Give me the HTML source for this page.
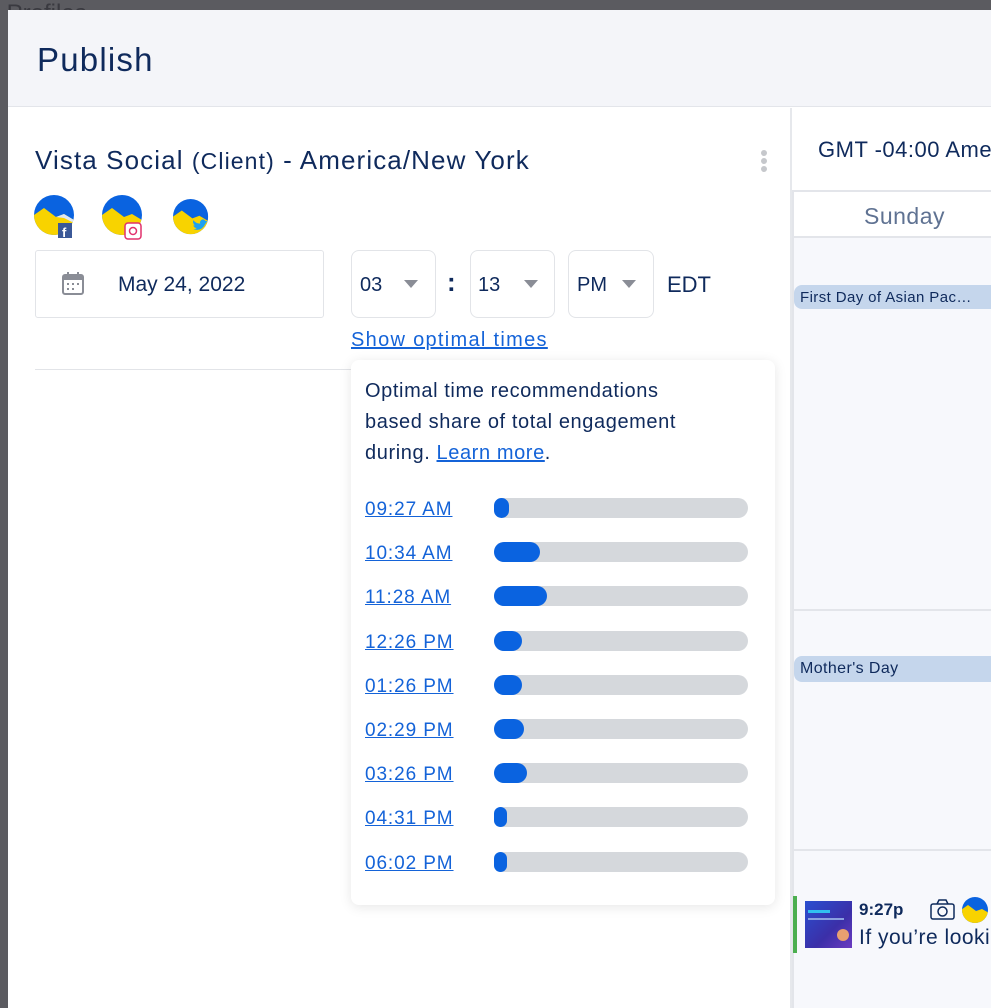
<!DOCTYPE html>
<html><head><meta charset="utf-8">
<style>
*{box-sizing:border-box;margin:0;padding:0}
body{width:991px;height:1008px;overflow:hidden;background:#5b5b60;font-family:"Liberation Sans",sans-serif;color:#0f2a5c;position:relative}
.abs{position:absolute}
.modal{left:8px;top:10px;width:983px;height:998px;background:#fff}
.hdr{left:8px;top:10px;width:983px;height:97px;background:#f4f5f9;border-bottom:1px solid #e3e5ea}
a,.lnk{color:#1463d8;text-decoration:underline}
.box{border:1px solid #e2e4e8;border-radius:8px;background:#fff}
.tri{width:0;height:0;border-left:7px solid transparent;border-right:7px solid transparent;border-top:8px solid #8a8d96;position:absolute}
.bar{position:absolute;left:494px;width:254px;height:20px;border-radius:10px;background:#d5d8dc}
.bar i{display:block;height:20px;border-radius:10px;background:#0a63e0}
.t{position:absolute;left:365px;font-size:19px;color:#1463d8;text-decoration:underline;letter-spacing:0.9px}
</style></head><body>
<div class="abs" style="left:0;top:0;font-size:24px;color:#3a3a40">&nbsp;Profiles</div>
<div class="abs modal"></div>
<div class="abs hdr"></div>
<div class="abs" style="left:37px;top:41px;font-size:33px;letter-spacing:1.2px">Publish</div>

<div class="abs" style="left:35px;top:145px;font-size:26px;letter-spacing:1.1px;white-space:nowrap">Vista Social <span style="font-size:23px">(Client)</span> - America/New York</div>
<div class="abs" style="left:761px;top:150px;width:6px;height:6px;border-radius:3px;background:#c6c8cc;box-shadow:0 8px 0 #c6c8cc,0 16px 0 #c6c8cc"></div>

<svg class="abs" style="left:34px;top:195px" width="180" height="48">
<defs><clipPath id="c"><circle cx="20" cy="20" r="20"/></clipPath></defs>
<g clip-path="url(#c)"><rect width="40" height="40" fill="#0a63e0"/><path d="M0 20 L10 13 L22 22 L30 19 L40 25 L40 40 L0 40Z" fill="#f8d300"/><path d="M22 22 L30 19 L40 25 L40 28 L30 23Z" fill="#dfe8f3"/></g>
<rect x="24" y="28" width="14" height="15" fill="#3b5998"/><text x="28" y="42" font-size="13" fill="#fff" font-weight="bold">f</text>
<g transform="translate(68,0)"><g clip-path="url(#c)"><rect width="40" height="40" fill="#0a63e0"/><path d="M0 20 L10 13 L22 22 L30 19 L40 25 L40 40 L0 40Z" fill="#f8d300"/></g>
<rect x="23" y="28" width="16" height="16" rx="3" fill="#fff" stroke="#e1306c" stroke-width="1.5"/><circle cx="31" cy="36" r="3.5" fill="none" stroke="#e1306c" stroke-width="1.5"/></g>
<g transform="translate(139,4) scale(0.88)"><g clip-path="url(#c)"><rect width="40" height="40" fill="#0a63e0"/><path d="M0 20 L10 13 L22 22 L30 19 L40 25 L40 40 L0 40Z" fill="#f8d300"/></g>
<path d="M22 34 q10 4 15-6 l2-3 -2 0 q-2-3-5-1 q-2 2-1 4 q-5 0-8-4 q-1 4 2 6 l-2 0 q1 3 4 3 q-2 2-5 1z" fill="#1da1f2"/></g>
</svg>

<div class="abs box" style="left:35px;top:250px;width:289px;height:68px;border-radius:3px"></div>
<svg class="abs" style="left:62px;top:272px" width="24" height="26"><rect x="1" y="3" width="20" height="19" rx="2" fill="none" stroke="#8a8d96" stroke-width="2"/><rect x="1" y="3" width="20" height="5" fill="#8a8d96"/><rect x="5" y="0" width="2" height="5" fill="#8a8d96"/><rect x="15" y="0" width="2" height="5" fill="#8a8d96"/><g fill="#8a8d96"><rect x="5" y="11" width="2" height="2"/><rect x="10" y="11" width="2" height="2"/><rect x="15" y="11" width="2" height="2"/><rect x="5" y="16" width="2" height="2"/><rect x="10" y="16" width="2" height="2"/></g></svg>
<div class="abs" style="left:118px;top:273px;font-size:21px">May 24, 2022</div>

<div class="abs box" style="left:351px;top:250px;width:85px;height:68px"></div>
<div class="abs" style="left:360px;top:274px;font-size:20px">03</div><div class="tri" style="left:404px;top:280px"></div>
<div class="abs" style="left:447px;top:267px;font-size:26px;font-weight:bold">:</div>
<div class="abs box" style="left:470px;top:250px;width:85px;height:68px"></div>
<div class="abs" style="left:478px;top:274px;font-size:20px">13</div><div class="tri" style="left:524px;top:280px"></div>
<div class="abs box" style="left:568px;top:250px;width:86px;height:68px"></div>
<div class="abs" style="left:577px;top:274px;font-size:20px">PM</div><div class="tri" style="left:622px;top:280px"></div>
<div class="abs" style="left:667px;top:272px;font-size:22px">EDT</div>
<div class="abs lnk" style="left:351px;top:329px;font-size:20px;letter-spacing:1.3px">Show optimal times</div>
<div class="abs" style="left:35px;top:369px;width:320px;height:1px;background:#e2e4e8"></div>

<div class="abs" style="left:351px;top:360px;width:424px;height:545px;background:#fff;border-radius:8px;box-shadow:0 2px 12px rgba(0,0,0,0.1)"></div>
<div class="abs" style="left:365px;top:376px;font-size:20px;line-height:31px;width:355px;letter-spacing:0.6px">Optimal time recommendations based share of total engagement during. <a>Learn more</a>.</div>

<div class="t" style="top:499px">09:27 AM</div><div class="bar" style="top:498px"><i style="width:15px"></i></div>
<div class="t" style="top:543px">10:34 AM</div><div class="bar" style="top:542px"><i style="width:46px"></i></div>
<div class="t" style="top:587px">11:28 AM</div><div class="bar" style="top:586px"><i style="width:53px"></i></div>
<div class="t" style="top:632px">12:26 PM</div><div class="bar" style="top:631px"><i style="width:28px"></i></div>
<div class="t" style="top:676px">01:26 PM</div><div class="bar" style="top:675px"><i style="width:28px"></i></div>
<div class="t" style="top:720px">02:29 PM</div><div class="bar" style="top:719px"><i style="width:30px"></i></div>
<div class="t" style="top:764px">03:26 PM</div><div class="bar" style="top:763px"><i style="width:33px"></i></div>
<div class="t" style="top:808px">04:31 PM</div><div class="bar" style="top:807px"><i style="width:13px"></i></div>
<div class="t" style="top:853px">06:02 PM</div><div class="bar" style="top:852px"><i style="width:13px"></i></div>

<!-- calendar -->
<div class="abs" style="left:790px;top:108px;width:2px;height:900px;background:#e6e8ec"></div>
<div class="abs" style="left:818px;top:137px;font-size:22px;white-space:nowrap;letter-spacing:0.5px">GMT -04:00 America</div>
<div class="abs" style="left:792px;top:190px;width:199px;height:818px;background:#f7f8fc;border-left:2px solid #e3e5ea;border-top:2px solid #e3e5ea"></div>
<div class="abs" style="left:794px;top:192px;width:197px;height:46px;background:#fff;border-bottom:2px solid #e3e5ea"></div>
<div class="abs" style="left:864px;top:203px;font-size:23px;color:#5f7292;letter-spacing:0.5px">Sunday</div>
<div class="abs" style="left:794px;top:285px;width:197px;height:24px;background:#c5d6ec;border-radius:8px 0 0 8px;font-size:15px;padding:4px 0 0 6px;white-space:nowrap;letter-spacing:0.4px">First Day of Asian Pac…</div>
<div class="abs" style="left:794px;top:609px;width:197px;height:2px;background:#e3e5ea"></div>
<div class="abs" style="left:794px;top:656px;width:197px;height:26px;background:#c5d6ec;border-radius:8px 0 0 8px;font-size:16px;padding:4px 0 0 6px;letter-spacing:0.4px">Mother's Day</div>
<div class="abs" style="left:794px;top:849px;width:197px;height:2px;background:#e3e5ea"></div>
<div class="abs" style="left:793px;top:896px;width:4px;height:57px;background:#4caf50"></div>
<div class="abs" style="left:805px;top:901px;width:47px;height:47px;background:linear-gradient(135deg,#2a4fd0,#3b2fa8 60%,#6b3bc0)"><div style="margin:9px 0 0 3px;width:22px;height:3px;background:#30c0f0"></div><div style="margin:5px 0 0 3px;width:36px;height:2px;background:#8aa0e0"></div><div style="position:absolute;left:32px;top:28px;width:12px;height:12px;border-radius:6px;background:#e8a070"></div></div>
<div class="abs" style="left:859px;top:900px;font-size:17px;font-weight:bold">9:27p</div>
<svg class="abs" style="left:930px;top:899px" width="26" height="22"><rect x="1" y="5" width="23" height="15" rx="2" fill="none" stroke="#0f2a5c" stroke-width="1.5"/><path d="M7 5 L9 1 L16 1 L18 5" fill="none" stroke="#0f2a5c" stroke-width="1.5"/><circle cx="12.5" cy="12.5" r="4.5" fill="none" stroke="#0f2a5c" stroke-width="1.5"/></svg>
<svg class="abs" style="left:961px;top:896px" width="30" height="28"><defs><clipPath id="c2"><circle cx="14" cy="14" r="13"/></clipPath></defs><g clip-path="url(#c2)"><rect width="30" height="28" fill="#0a63e0"/><path d="M0 14 L7 9 L15 15 L21 13 L28 17 L28 28 L0 28Z" fill="#f8d300"/></g></svg>
<div class="abs" style="left:859px;top:926px;font-size:21px;white-space:nowrap;letter-spacing:0.5px">If you’re looking</div>
</body></html>
